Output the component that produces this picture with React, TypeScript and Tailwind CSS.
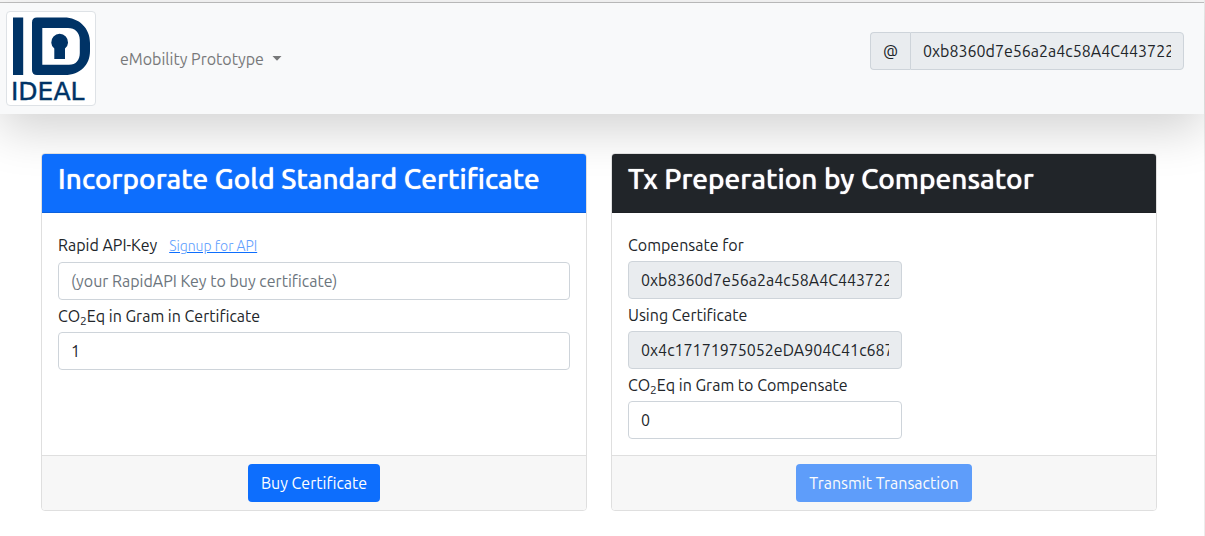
import React from "react";
import type { InputHTMLAttributes, ReactNode } from "react";

const WALLET = "0xb8360d7e56a2a4c58A4C443722";
const CERTIFICATE = "0x4c17171975052eDA904C41c687";

const inputBase =
  "h-[38px] border border-[#ced4da] px-3 text-base text-[#212529] placeholder:text-[#6c757d] placeholder:opacity-100 focus:outline-none focus:border-[#86b7fe]";

function Logo() {
  return (
    <svg viewBox="0 0 80 85" className="h-[85px] w-20 overflow-visible" role="img" aria-label="IDEAL">
      <g fill="#003366">
        <rect x="2" y="1.5" width="10.2" height="57.5" />
        <path
          fillRule="evenodd"
          d="M21 6.5 Q21 1.5 26 1.5 H53 C68 1.5 79 12 79 27 V35 C79 49 69 59 54 59 H26 Q21 59 21 54 Z M31.3 12 V48.8 H58 C65 48.8 68.8 44 68.8 37 V24 C68.8 16.5 64 12 57 12 Z"
        />
        <path d="M43.3 43 V32.6 A8.4 8.4 0 1 1 54 32.6 V43 Z" />
      </g>
      <text
        x="0"
        y="84"
        fill="#003366"
        stroke="#003366"
        strokeWidth="0.4"
        fontFamily="'DejaVu Sans', sans-serif"
        fontSize="25"
      >
        IDEAL
      </text>
    </svg>
  );
}

function Field({
  id,
  label,
  extra,
  className,
  ...props
}: { id: string; label: ReactNode; extra?: ReactNode; className: string } & InputHTMLAttributes<HTMLInputElement>) {
  return (
    <div className="flex flex-col gap-1 pt-1">
      <div className="flex items-baseline gap-3">
        <label htmlFor={id} className="leading-6">
          {label}
        </label>
        {extra}
      </div>
      <input id={id} className={`${inputBase} rounded ${className}`} {...props} />
    </div>
  );
}

function Card({
  title,
  headerClass,
  footer,
  children,
}: {
  title: string;
  headerClass: string;
  footer: ReactNode;
  children: ReactNode;
}) {
  return (
    <section className="flex flex-col overflow-hidden rounded border border-[#dfdfdf] bg-white">
      <header className={`border-b px-4 pt-2 pb-4 text-white ${headerClass}`}>
        <h3 className="text-[28px] leading-[34px] font-medium [text-shadow:0_0_1px_currentColor]">
          {title}
        </h3>
      </header>
      <div className="flex-1 p-4">{children}</div>
      <footer className="flex justify-center border-t border-[#dfdfdf] bg-[#f7f7f7] py-2">{footer}</footer>
    </section>
  );
}

const buttonClass =
  "h-[38px] rounded bg-[#0d6efd] px-[13px] text-base text-white hover:bg-[#0b5ed7] disabled:opacity-65 disabled:hover:bg-[#0d6efd]";

export default function App() {
  return (
    <div className="flex min-h-screen flex-col border-r border-[#ececec] bg-white font-['Ubuntu','Noto_Sans',sans-serif] text-base text-[#212529]">
      <div className="h-[3px] border-b border-[#c0c0c0] bg-[#f8f8f8]" />
      <nav className="flex items-center justify-between bg-[#f8f9fa] py-2 pr-5 pl-1.5 shadow-[0_16px_48px_rgba(0,0,0,0.175)]">
        <div className="flex items-center gap-6">
          <a href="#home" className="block rounded border border-[#dee2e6] bg-white p-1">
            <Logo />
          </a>
          <button type="button" aria-haspopup="menu" className="flex items-center gap-2 text-[#777879]">
            eMobility Prototype
            <svg viewBox="0 0 10 5" className="h-[5px] w-2.5" fill="currentColor" aria-hidden="true">
              <path d="M0.5 0h9L5 4.8z" />
            </svg>
          </button>
        </div>
        <div className="mb-4 flex">
          <label
            htmlFor="account"
            className="flex h-[38px] items-center rounded-l border border-r-0 border-[#ced4da] bg-[#e9ecef] px-3"
          >
            @
          </label>
          <input
            id="account"
            className={`${inputBase} w-[274px] rounded-r bg-[#e9ecef]`}
            readOnly
            defaultValue={WALLET}
          />
        </div>
      </nav>
      <main className="grid grid-cols-2 gap-6 pt-[39px] pr-[47px] pb-6 pl-[41px]">
        <Card
          title="Incorporate Gold Standard Certificate"
          headerClass="bg-[#0d6efd] border-[#0b60dd]"
          footer={
            <button type="button" className={buttonClass}>
              Buy Certificate
            </button>
          }
        >
          <Field
            id="api-key"
            label="Rapid API-Key"
            extra={
              <a
                href="#signup"
                className="text-sm leading-6 font-light text-[#5e9efe] underline decoration-[#0d6efd]"
              >
                Signup for API
              </a>
            }
            className="w-full bg-white"
            placeholder="(your RapidAPI Key to buy certificate)"
          />
          <Field
            id="certificate-amount"
            label={
              <>
                CO<sub>2</sub>Eq in Gram in Certificate
              </>
            }
            className="w-full bg-white"
            defaultValue="1"
          />
        </Card>
        <Card
          title="Tx Preperation by Compensator"
          headerClass="bg-[#212529] border-[#1d2024]"
          footer={
            <button type="button" disabled className={buttonClass}>
              Transmit Transaction
            </button>
          }
        >
          <Field
            id="compensate-for"
            label="Compensate for"
            className="w-[274px] bg-[#e9ecef]"
            readOnly
            defaultValue={WALLET}
          />
          <Field
            id="using-certificate"
            label="Using Certificate"
            className="w-[274px] bg-[#e9ecef]"
            readOnly
            defaultValue={CERTIFICATE}
          />
          <Field
            id="compensate-amount"
            label={
              <>
                CO<sub>2</sub>Eq in Gram to Compensate
              </>
            }
            className="w-[274px] bg-white"
            defaultValue="0"
          />
        </Card>
      </main>
    </div>
  );
}
